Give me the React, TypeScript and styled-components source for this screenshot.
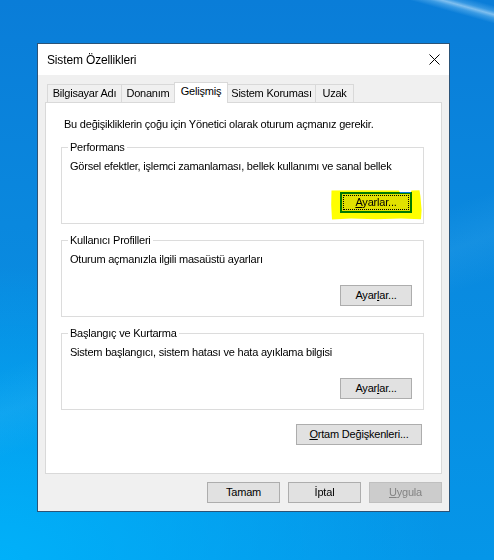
import React from "react";
import styled, { createGlobalStyle, css } from "styled-components";

const Global = createGlobalStyle`
  html, body { margin: 0; padding: 0; }
  body {
    font-family: "Liberation Sans", Arial, sans-serif;
    -webkit-font-smoothing: none;
  }
`;

const Desktop = styled.div`
  width: 494px;
  height: 560px;
  overflow: hidden;
  box-sizing: border-box;
  padding: 43px 0 0 37px;
  background:
    linear-gradient(15.5deg, rgba(255,255,255,0) 96.6%, rgba(150,210,250,0.35) 97.4%, rgba(205,235,255,0.6) 97.9%, rgba(150,210,250,0.3) 98.4%, rgba(255,255,255,0) 99.2%),
    linear-gradient(160deg, rgba(255,255,255,0) 50%, rgba(120,210,255,0.1) 56%, rgba(255,255,255,0) 62%),
    radial-gradient(120% 70% at 0% 100%, rgba(0, 178, 250, 0.95) 0%, rgba(0, 170, 245, 0) 75%),
    linear-gradient(180deg, #0a7dd8 0%, #0a88de 40%, #0596e8 100%);
`;

const Window = styled.div`
  width: 413px;
  height: 469px;
  box-sizing: border-box;
  border: 1px solid #2b5377;
  background: #f0f0f0;
  display: flex;
  flex-direction: column;
  color: #000;
`;

const TitleBar = styled.div`
  height: 31px;
  flex: none;
  background: #fff;
  display: flex;
  align-items: center;
  padding-left: 9px;
`;

const Title = styled.div`
  flex: 1;
  font-size: 12px;
  letter-spacing: -0.15px;
`;

const CloseButton = styled.div`
  width: 30px;
  height: 31px;
  display: flex;
  align-items: center;
  justify-content: center;
`;

const Body = styled.div`
  flex: 1;
  display: flex;
  flex-direction: column;
  padding: 7px 7px 8px 7px;
  min-height: 0;
  font-size: 11px;
  letter-spacing: -0.22px;
`;

const TabStrip = styled.div`
  height: 20px;
  flex: none;
  display: flex;
  align-items: flex-end;
  padding-left: 2px;
`;

const Tab = styled.div<{ $w: number; $active?: boolean }>`
  width: ${(p) => p.$w}px;
  box-sizing: border-box;
  border: 1px solid #d9d9d9;
  border-bottom: none;
  margin-right: -1px;
  text-align: center;
  white-space: nowrap;
  height: 18px;
  line-height: 17px;
  background: #f0f0f0;
  ${(p) =>
    p.$active &&
    css`
      position: relative;
      z-index: 1;
      height: 21px;
      margin-bottom: -1px;
      background: #fff;
      line-height: 15px;
      padding-top: 1px;
    `}
`;

const Panel = styled.div`
  flex: 1;
  min-height: 0;
  background: #fff;
  border: 1px solid #d9d9d9;
  padding: 15px 17px 0 15px;
  display: flex;
  flex-direction: column;
`;

const Intro = styled.p`
  margin: 0 0 10px 3px;
  line-height: 13px;
`;

const Group = styled.fieldset`
  margin: 0;
  min-width: 0;
  border: 1px solid #dcdcdc;
  padding: 7px 11px 10px 8px;
  & + & {
    margin-top: 10px;
  }
`;

const Legend = styled.legend`
  padding: 0 2px;
  margin-left: -2px;
  line-height: 12px;
`;

const Desc = styled.p`
  margin: 0;
  line-height: 13px;
`;

const ButtonRow = styled.div<{ $top?: number; $right?: number }>`
  display: flex;
  justify-content: flex-end;
  margin-top: ${(p) => p.$top ?? 0}px;
  padding-right: ${(p) => p.$right ?? 0}px;
`;

const Footer = styled.div`
  flex: none;
  display: flex;
  justify-content: flex-end;
  gap: 8px;
  margin-top: 8px;
`;

const Slot = styled.div`
  position: relative;
`;

const Button = styled.button<{ $w: number; $focused?: boolean }>`
  position: relative;
  width: ${(p) => p.$w}px;
  height: 21px;
  box-sizing: border-box;
  margin: 0;
  padding: 0;
  border: 1px solid #adadad;
  background: #e1e1e1;
  color: #000;
  font-family: inherit;
  font-size: 11px;
  letter-spacing: -0.2px;
  line-height: 19px;
  text-align: center;
  &:disabled {
    background: #cccccc;
    border-color: #bfbfbf;
    color: #838383;
  }
  ${(p) =>
    p.$focused &&
    css`
      border-color: #0078d7;
      box-shadow: inset 0 0 0 1px #0078d7;
      &::after {
        content: "";
        position: absolute;
        inset: 2px;
        border: 1px dotted #000;
      }
    `}
`;

const Key = styled.span`
  text-decoration: underline;
  text-underline-offset: 1px;
`;

const Highlight = styled.svg`
  position: absolute;
  left: -9px;
  top: -2px;
  width: 91px;
  height: 30px;
  mix-blend-mode: multiply;
  pointer-events: none;
`;

const CloseIcon = () => (
  <svg width="11" height="11" viewBox="0 0 11 11">
    <path d="M0.5 0.5 L10.5 10.5 M10.5 0.5 L0.5 10.5" stroke="#000" strokeWidth="1" fill="none" />
  </svg>
);

const tabs: { label: string; w: number; active?: boolean }[] = [
  { label: "Bilgisayar Adı", w: 75 },
  { label: "Donanım", w: 54 },
  { label: "Gelişmiş", w: 54, active: true },
  { label: "Sistem Koruması", w: 89 },
  { label: "Uzak", w: 39 },
];

export default function App() {
  return (
    <>
      <Global />
      <Desktop>
        <Window>
          <TitleBar>
            <Title>Sistem Özellikleri</Title>
            <CloseButton>
              <CloseIcon />
            </CloseButton>
          </TitleBar>
          <Body>
            <TabStrip>
              {tabs.map((t) => (
                <Tab key={t.label} $w={t.w} $active={t.active}>
                  {t.label}
                </Tab>
              ))}
            </TabStrip>
            <Panel>
              <Intro>Bu değişikliklerin çoğu için Yönetici olarak oturum açmanız gerekir.</Intro>
              <Group>
                <Legend>Performans</Legend>
                <Desc>Görsel efektler, işlemci zamanlaması, bellek kullanımı ve sanal bellek</Desc>
                <ButtonRow $top={19}>
                  <Slot>
                    <Button $w={72} $focused>
                      <Key>A</Key>yarlar...
                    </Button>
                    <Highlight viewBox="0 0 91 30">
                      <path
                        d="M0.5 0.6 L30 0.2 L68 0.4 L69 3 L79.5 3 L80.5 0.5 L88.5 0.2 L89.4 6 L90.6 20 L90 29.2 L70 28.4 L45 29.3 L20 28.6 L1 29.5 L0.2 15 Z"
                        fill="#ffff00"
                      />
                    </Highlight>
                  </Slot>
                </ButtonRow>
              </Group>
              <Group>
                <Legend>Kullanıcı Profilleri</Legend>
                <Desc>Oturum açmanızla ilgili masaüstü ayarları</Desc>
                <ButtonRow $top={19}>
                  <Button $w={72}>
                    Ayar<Key>l</Key>ar...
                  </Button>
                </ButtonRow>
              </Group>
              <Group>
                <Legend>Başlangıç ve Kurtarma</Legend>
                <Desc>Sistem başlangıcı, sistem hatası ve hata ayıklama bilgisi</Desc>
                <ButtonRow $top={19}>
                  <Button $w={72}>
                    Ayar<Key>l</Key>ar...
                  </Button>
                </ButtonRow>
              </Group>
              <ButtonRow $top={14} $right={2}>
                <Button $w={126}>
                  <Key>O</Key>rtam Değişkenleri...
                </Button>
              </ButtonRow>
            </Panel>
            <Footer>
              <Button $w={73}>Tamam</Button>
              <Button $w={73}>İptal</Button>
              <Button $w={73} disabled>
                <Key>U</Key>ygula
              </Button>
            </Footer>
          </Body>
        </Window>
      </Desktop>
    </>
  );
}
